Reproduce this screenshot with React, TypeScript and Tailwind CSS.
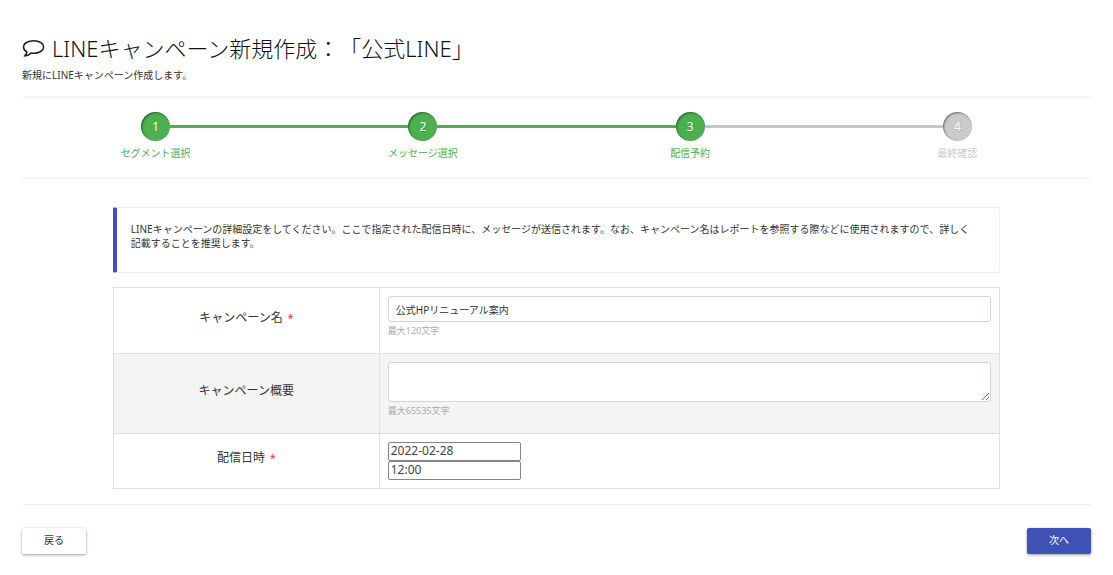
import { clsx } from 'clsx';

const steps = [
  { label: 'セグメント選択', done: true },
  { label: 'メッセージ選択', done: true },
  { label: '配信予約', done: true },
  { label: '最終確認', done: false },
];

const lineColor = (index: number) => {
  if (index < 1 || index >= steps.length) return 'bg-transparent';
  return steps[index].done ? 'bg-[#4caf50]' : 'bg-[#c6c6c6]';
};

const CommentIcon = () => (
  <svg viewBox="0 0 24 20" className="h-5 w-6 shrink-0" fill="none" stroke="#222" strokeWidth="1.5" strokeLinejoin="round" aria-hidden="true">
    <path d="M11.700 2.700c5.600 0 9.900 2.700 9.900 6.300s-4.300 6.300-9.900 6.300c-.9 0-1.800-.1-2.600-.2-1.800 1.600-3.900 2.700-6.700 3 1.200-.9 2.100-2.200 2.500-4.100C2.700 12.800 1.500 11 1.500 9c0-3.600 4.600-6.300 10.200-6.300z" />
  </svg>
);

const Stepper = () => (
  <ol className="flex border-y-2 border-[#f6f6f6] pt-3.5 pb-4">
    {steps.map((step, i) => (
      <li key={step.label} className="flex flex-1 flex-col items-center">
        <div className="flex w-full items-center">
          <span className={clsx('h-[3px] flex-1', lineColor(i))} />
          <span
            className={clsx(
              'flex size-[29px] items-center justify-center rounded-full text-xs text-white shadow-[inset_1px_1px_2px_rgba(0,0,0,0.45)] text-shadow-[1px_1px_1px_rgba(0,0,0,0.15)]',
              step.done ? 'bg-[#4caf50]' : 'bg-[#cacaca]'
            )}
          >
            {i + 1}
          </span>
          <span className={clsx('h-[3px] flex-1', lineColor(i + 1))} />
        </div>
        <span className={clsx('mt-1 text-[10px] leading-4', step.done ? 'text-[#4caf50]' : 'text-[#cacaca]')}>
          {step.label}
        </span>
      </li>
    ))}
  </ol>
);

const Required = () => <span className="ml-0.5 text-[10px] text-[#ff2a1a]">*</span>;

const CampaignForm = () => (
  <table className="mt-3.5 w-full table-fixed border-collapse border border-[#e0e0e0]">
    <tbody>
      <tr className="border-b border-[#e0e0e0]">
        <th scope="row" className="w-[30%] border-r border-[#e0e0e0] pb-1.5 text-xs font-normal">
          <label htmlFor="name">キャンペーン名 <Required /></label>
        </th>
        <td className="px-2 pt-2 pb-3.5">
          <input
            id="name"
            type="text"
            maxLength={120}
            defaultValue="公式HPリニューアル案内"
            className="block h-[26px] w-full rounded-[3px] border border-[#ccd5e3] bg-white px-[7px] text-[10px]"
          />
          <p className="mt-px text-[9px] leading-4 text-[#aaa]">最大120文字</p>
        </td>
      </tr>
      <tr className="border-b border-[#e0e0e0] bg-[#f4f4f4]">
        <th scope="row" className="border-r border-[#e0e0e0] pb-1.5 text-xs font-normal">
          <label htmlFor="summary">キャンペーン概要</label>
        </th>
        <td className="px-2 pt-2 pb-3.5">
          <textarea
            id="summary"
            maxLength={65535}
            className="block h-10 w-full resize rounded-[3px] border border-[#ccd5e3] bg-white px-[7px] text-[10px]"
          />
          <p className="mt-px text-[9px] leading-4 text-[#aaa]">最大65535文字</p>
        </td>
      </tr>
      <tr>
        <th scope="row" className="border-r border-[#e0e0e0] pb-1.5 text-xs font-normal">
          <label htmlFor="date">配信日時 <Required /></label>
        </th>
        <td className="p-2">
          <input
            id="date"
            type="text"
            defaultValue="2022-02-28"
            className="block h-[19px] w-[133px] rounded-xs border border-[#858585] bg-white px-0.5 pb-0.5 text-xs text-[#444]"
          />
          <input
            type="text"
            aria-label="配信時刻"
            defaultValue="12:00"
            className="block h-[19px] w-[133px] rounded-xs border border-[#858585] bg-white px-0.5 pb-0.5 text-xs text-[#444]"
          />
        </td>
      </tr>
    </tbody>
  </table>
);

const App = () => {
  return (
    <main className="px-[22px] pt-8 pb-5 font-['Noto_Sans','Noto_Sans_CJK_JP',sans-serif] text-[#333] [text-spacing-trim:space-all]">
      <header className="pb-3">
        <h1 className="flex items-center gap-1.5 text-[22px] leading-8 font-light text-[#111]">
          <CommentIcon />
          LINEキャンペーン新規作成：「公式LINE」
        </h1>
        <p className="mt-0.5 text-[10px] leading-[18px]">新規にLINEキャンペーン作成します。</p>
      </header>

      <Stepper />

      <section className="mx-auto mt-7 w-[83%]">
        <div className="rounded-xs border border-l-4 border-[#f0f0f0] border-l-[#3f51b5] pt-3.5 pr-5 pb-[22px] pl-3.5">
          <p className="text-[10px] leading-[14px]">
            LINEキャンペーンの詳細設定をしてください。ここで指定された配信日時に、メッセージが送信されます。なお、キャンペーン名はレポートを参照する際などに使用されますので、詳しく記載することを推奨します。
          </p>
        </div>
        <CampaignForm />
      </section>

      <footer className="mt-[15px] flex justify-between border-t border-[#f0f0f0] pt-[23px]">
        <button type="button" className="h-[26px] rounded-xs bg-white px-[22px] pb-0.5 text-[10px] shadow-[0_1px_3px_rgba(0,0,0,0.4)]">
          戻る
        </button>
        <button type="button" className="h-[26px] rounded-xs bg-[#3f51b5] px-[22px] pb-0.5 text-[10px] text-white shadow-[0_1px_3px_rgba(0,0,0,0.4)]">
          次へ
        </button>
      </footer>
    </main>
  );
};

export default App;
